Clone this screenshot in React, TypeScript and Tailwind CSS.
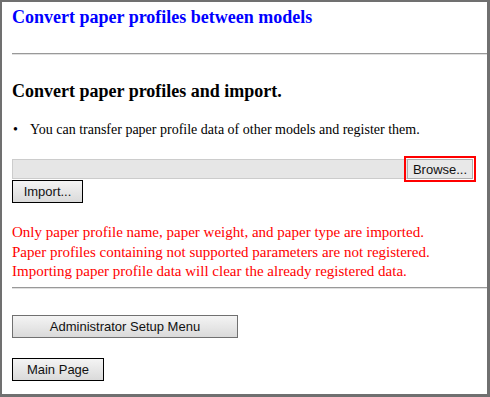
export default function App() {
  const btn =
    "h-[23px] bg-gradient-to-b from-[#f4f4f4] to-[#dadada] text-[13px] text-[#111] font-['Liberation_Sans',Arial,sans-serif] leading-none";
  return (
    <div className="w-[490px] h-[397px] bg-white border-l-2 border-t-2 border-r-[3px] border-b-[3px] border-[#707070] font-['Liberation_Serif','Times_New_Roman',serif] overflow-hidden">
      <div className="pl-[10px]">
        <h1 className="pt-[5px] text-[18px] leading-[20px] font-bold text-[#0000ff]">
          Convert paper profiles between models
        </h1>
        <div className="mt-[26px] border-t border-[#999] border-b border-b-[#e0e0e0]" />

        <h2 className="mt-[26px] text-[18px] leading-[20px] font-bold text-black">
          Convert paper profiles and import.
        </h2>

        <div className="mt-[20px] flex items-start text-[14px] leading-[18px] text-black">
          <span className="w-[18px] pl-px">•</span>
          <span>You can transfer paper profile data of other models and register them.</span>
        </div>

        {/* file input */}
        <div className="mt-[20px] w-[461px] h-[20px] flex">
          <div className="flex-1 bg-[#e6e6e6] border border-[#cccccc] border-r-0" />
          <button className="w-[66px] h-[20px] bg-[#e8e8e8] border border-[#adadad] outline-2 outline-offset-1 outline-[#ff0000] text-[13px] text-[#111] font-['Liberation_Sans',Arial,sans-serif] leading-none">
            Browse...
          </button>
        </div>

        <button className={`${btn} mt-[1px] w-[71px] border border-black`}>Import...</button>

        <div className="mt-[20px] text-[15px] leading-[19.5px] text-[#ff0000]">
          <p>Only paper profile name, paper weight, and paper type are imported.</p>
          <p>Paper profiles containing not supported parameters are not registered.</p>
          <p>Importing paper profile data will clear the already registered data.</p>
        </div>

        <div className="mt-[5px] border-t border-[#999] border-b border-b-[#e0e0e0]" />

        <div className="mt-[25px]">
          <button className={`${btn} w-[226px] border border-[#707070]`}>Administrator Setup Menu</button>
        </div>
        <div className="mt-[19px]">
          <button className={`${btn} w-[92px] border border-black`}>Main Page</button>
        </div>
      </div>
    </div>
  );
}
